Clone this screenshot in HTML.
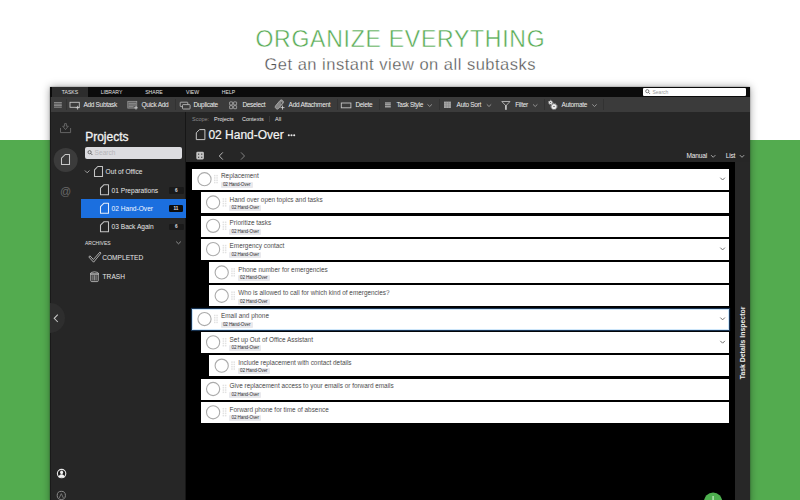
<!DOCTYPE html>
<html><head><meta charset="utf-8">
<style>
*{margin:0;padding:0;box-sizing:border-box}
html,body{width:800px;height:500px;overflow:hidden;background:#fff;font-family:"Liberation Sans",sans-serif}
.a{position:absolute;white-space:nowrap}
#green{position:absolute;left:0;top:140px;width:800px;height:360px;background:#53ab4f}
#title{left:0;width:800px;top:28px;text-align:center;color:#57ab54;font-size:23px;letter-spacing:0.75px;line-height:23px;text-indent:0.75px;-webkit-text-stroke:0.45px #fff}
#sub{left:0;width:800px;top:54.5px;text-align:center;color:#505050;font-size:16.5px;letter-spacing:0.5px;line-height:18px;text-indent:0.5px;-webkit-text-stroke:0.3px #fff}
#win{position:absolute;left:50px;top:87px;width:700px;height:420px;background:#262626;box-shadow:0 0 1.5px rgba(0,0,0,.4),0 0 8px rgba(0,0,0,.38)}
.p{position:absolute;white-space:nowrap}
.tab{position:absolute;top:87px;height:10px;color:#e2e2e2;font-size:5.1px;line-height:10px;text-align:center}
.tb{position:absolute;top:97.2px;height:15px;line-height:15px;color:#ededed;font-size:6.5px;letter-spacing:-0.3px;margin-left:0.8px;white-space:nowrap}
.sep{position:absolute;top:99px;width:1px;height:11px;background:#323232}
.card{position:absolute;background:#fff}
.card.sel{box-shadow:0 0 0 1.1px #1a3554;border:1.2px solid #cde6fa}
.ct{position:absolute;font-size:6.4px;line-height:8px;color:#1f1f1f;white-space:nowrap;-webkit-text-stroke:0.1px #fff}
.tag{position:absolute;height:6px;padding:0 2.3px;font-size:4.6px;letter-spacing:-0.12px;line-height:6px;color:#333;background:#e9e9ed;border-radius:1px;white-space:nowrap}
.sb{position:absolute;white-space:nowrap;color:#e6e6e6;font-size:6.6px;line-height:8px}
.badge{position:absolute;height:6.6px;width:14.5px;background:#1a1a1a;color:#e0e0e0;font-size:4.6px;line-height:4.6px;display:flex;align-items:center;justify-content:center;padding-top:1.3px;border-radius:1.2px;font-weight:bold}
</style></head><body>
<div id="green"></div>
<div id="title" class="a">ORGANIZE EVERYTHING</div>
<div id="sub" class="a">Get an instant view on all subtasks</div>

<div id="win"></div>
<!-- tab bar -->
<div class="p" style="left:50px;top:87px;width:700px;height:10px;background:#0b0b0b"></div>
<div class="tab" style="left:52px;width:36px;background:#2d2d2d">TASKS</div>
<div class="tab" style="left:99px;width:25px">LIBRARY</div>
<div class="tab" style="left:144px;width:20px">SHARE</div>
<div class="tab" style="left:184.5px;width:16px">VIEW</div>
<div class="tab" style="left:220.5px;width:16px">HELP</div>
<div class="p" style="left:643px;top:88px;width:102.6px;height:8px;background:#fff;border-radius:1px"></div>
<div class="p" style="left:652.5px;top:87.8px;height:8px;line-height:8px;font-size:5px;color:#9a9a9a">Search</div>
<!-- toolbar -->
<div class="p" style="left:50px;top:97px;width:700px;height:15px;background:#3b3b3b"></div>
<div class="tb" style="left:82.6px">Add Subtask</div>
<div class="tb" style="left:140.6px">Quick Add</div>
<div class="tb" style="left:192.6px">Duplicate</div>
<div class="tb" style="left:241.6px">Deselect</div>
<div class="tb" style="left:287.8px">Add Attachment</div>
<div class="tb" style="left:354.6px">Delete</div>
<div class="tb" style="left:395.6px">Task Style</div>
<div class="tb" style="left:455.8px">Auto Sort</div>
<div class="tb" style="left:514.4px">Filter</div>
<div class="tb" style="left:560.8px">Automate</div>
<div class="sep" style="left:66px"></div>
<div class="sep" style="left:175.3px"></div>
<div class="sep" style="left:337.3px"></div>
<div class="sep" style="left:379.3px"></div>
<div class="sep" style="left:438.5px"></div>
<div class="sep" style="left:543.5px"></div>
<div class="sep" style="left:603px"></div>

<!-- sidebar -->
<div class="p" style="left:50px;top:112px;width:135px;height:388px;background:#262626"></div>
<div class="p" style="left:185px;top:112px;width:1px;height:388px;background:#161616"></div>
<div class="p" style="left:50px;top:97px;width:0.8px;height:403px;background:#1a1a1a"></div>
<div class="p" style="left:85.2px;top:130.9px;font-size:12px;line-height:13px;color:#f2f2f2;-webkit-text-stroke:0.3px #f2f2f2">Projects</div>
<div class="p" style="left:84.8px;top:147px;width:97.7px;height:11.8px;background:#dcdce0;border-radius:2px"></div>
<div class="p" style="left:94.6px;top:148.5px;font-size:6.6px;line-height:8px;color:#b4b4b8">Search</div>
<div class="sb" style="left:105.6px;top:168.3px">Out of Office</div>
<div class="sb" style="left:111.6px;top:186.6px">01 Preparations</div>
<div class="badge" style="left:169px;top:187px">6</div>
<div class="p" style="left:80.6px;top:198.8px;width:105px;height:19px;background:#1b6fdf"></div>
<div class="sb" style="left:111.6px;top:205.1px;color:#f4f8ff">02 Hand-Over</div>
<div class="badge" style="left:168.6px;top:205.4px;background:#0c0c0c;color:#e8e8e8">11</div>
<div class="sb" style="left:111.6px;top:223.4px">03 Back Again</div>
<div class="badge" style="left:169px;top:223.6px">6</div>
<div class="p" style="left:85px;top:239.7px;font-size:5px;line-height:6px;color:#e0e0e0">ARCHIVES</div>
<div class="sb" style="left:102.2px;top:254px">COMPLETED</div>
<div class="sb" style="left:102.6px;top:272.6px">TRASH</div>

<!-- main header -->
<div class="p" style="left:186px;top:112px;width:564px;height:50.5px;background:#262626"></div>
<div class="p" style="left:192px;top:115.8px;font-size:5.5px;line-height:7px;color:#8a8a8a">Scope:</div>
<div class="p" style="left:214px;top:115.8px;font-size:5.5px;line-height:7px;color:#e6e6e6">Projects</div>
<div class="p" style="left:242px;top:115.8px;font-size:5.5px;line-height:7px;color:#e6e6e6">Contexts</div>
<div class="p" style="left:269px;top:115.5px;width:0.8px;height:6.3px;background:#3a3a3a"></div>
<div class="p" style="left:275px;top:115.8px;font-size:5.5px;line-height:7px;color:#e6e6e6">All</div>
<div class="p" style="left:208.4px;top:128.3px;font-size:12px;line-height:14px;color:#f4f4f4;-webkit-text-stroke:0.2px #f4f4f4">02 Hand-Over</div>
<div class="p" style="left:686.6px;top:151.9px;font-size:6.6px;letter-spacing:-0.22px;line-height:8px;color:#ededed">Manual</div>
<div class="p" style="left:725.7px;top:151.9px;font-size:6.6px;letter-spacing:-0.22px;line-height:8px;color:#ededed">List</div>

<!-- list -->
<div class="p" style="left:186px;top:162.2px;width:549px;height:338px;background:#000"></div>
<div class="p" style="left:735px;top:162.2px;width:15px;height:338px;background:#272727"></div>
<div class="p" style="left:742.5px;top:343px;font-size:6.9px;line-height:8px;font-weight:bold;color:#f0f0f0;transform:translate(-50%,-50%) rotate(-90deg)">Task Details Inspector</div>
<div class="card" style="left:192.00px;top:168.90px;width:537.00px;height:21.0px"></div>
<div class="ct" style="left:221.00px;top:172.40px">Replacement</div>
<div class="tag" style="left:220.60px;top:182.00px">02 Hand-Over</div>
<div class="card" style="left:200.60px;top:192.21px;width:528.40px;height:21.0px"></div>
<div class="ct" style="left:229.60px;top:195.71px">Hand over open topics and tasks</div>
<div class="tag" style="left:229.20px;top:205.31px">02 Hand-Over</div>
<div class="card" style="left:200.60px;top:215.52px;width:528.40px;height:21.0px"></div>
<div class="ct" style="left:229.60px;top:219.02px">Prioritize tasks</div>
<div class="tag" style="left:229.20px;top:228.62px">02 Hand-Over</div>
<div class="card" style="left:200.60px;top:238.83px;width:528.40px;height:21.0px"></div>
<div class="ct" style="left:229.60px;top:242.33px">Emergency contact</div>
<div class="tag" style="left:229.20px;top:251.93px">02 Hand-Over</div>
<div class="card" style="left:209.20px;top:262.14px;width:519.80px;height:21.0px"></div>
<div class="ct" style="left:238.20px;top:265.64px">Phone number for emergencies</div>
<div class="tag" style="left:237.80px;top:275.24px">02 Hand-Over</div>
<div class="card" style="left:209.20px;top:285.45px;width:519.80px;height:21.0px"></div>
<div class="ct" style="left:238.20px;top:288.95px">Who is allowed to call for which kind of emergencies?</div>
<div class="tag" style="left:237.80px;top:298.55px">02 Hand-Over</div>
<div class="card sel" style="left:192.00px;top:308.76px;width:537.00px;height:21.0px"></div>
<div class="ct" style="left:221.00px;top:312.26px">Email and phone</div>
<div class="tag" style="left:220.60px;top:321.86px">02 Hand-Over</div>
<div class="card" style="left:200.60px;top:332.07px;width:528.40px;height:21.0px"></div>
<div class="ct" style="left:229.60px;top:335.57px">Set up Out of Office Assistant</div>
<div class="tag" style="left:229.20px;top:345.17px">02 Hand-Over</div>
<div class="card" style="left:209.20px;top:355.38px;width:519.80px;height:21.0px"></div>
<div class="ct" style="left:238.20px;top:358.88px">Include replacement with contact details</div>
<div class="tag" style="left:237.80px;top:368.48px">02 Hand-Over</div>
<div class="card" style="left:200.60px;top:378.69px;width:528.40px;height:21.0px"></div>
<div class="ct" style="left:229.60px;top:382.19px">Give replacement access to your emails or forward emails</div>
<div class="tag" style="left:229.20px;top:391.79px">02 Hand-Over</div>
<div class="card" style="left:200.60px;top:402.00px;width:528.40px;height:21.0px"></div>
<div class="ct" style="left:229.60px;top:405.50px">Forward phone for time of absence</div>
<div class="tag" style="left:229.20px;top:415.10px">02 Hand-Over</div>

<svg width="800" height="500" viewBox="0 0 800 500" style="position:absolute;left:0;top:0">
<circle cx="204.50" cy="179.20" r="6.6" fill="none" stroke="#ababab" stroke-width="1.1"/>
<rect x="214.00" y="174.90" width="1.5" height="1.5" fill="#e2e2e2"/>
<rect x="216.30" y="174.90" width="1.5" height="1.5" fill="#e2e2e2"/>
<rect x="214.00" y="177.20" width="1.5" height="1.5" fill="#e2e2e2"/>
<rect x="216.30" y="177.20" width="1.5" height="1.5" fill="#e2e2e2"/>
<rect x="214.00" y="179.50" width="1.5" height="1.5" fill="#e2e2e2"/>
<rect x="216.30" y="179.50" width="1.5" height="1.5" fill="#e2e2e2"/>
<rect x="214.00" y="181.80" width="1.5" height="1.5" fill="#e2e2e2"/>
<rect x="216.30" y="181.80" width="1.5" height="1.5" fill="#e2e2e2"/>
<path d="M720.3 177.70 L722.6 180.00 L724.9 177.70" fill="none" stroke="#6e6e6e" stroke-width="1"/>
<circle cx="213.10" cy="202.51" r="6.6" fill="none" stroke="#ababab" stroke-width="1.1"/>
<rect x="222.60" y="198.21" width="1.5" height="1.5" fill="#e2e2e2"/>
<rect x="224.90" y="198.21" width="1.5" height="1.5" fill="#e2e2e2"/>
<rect x="222.60" y="200.51" width="1.5" height="1.5" fill="#e2e2e2"/>
<rect x="224.90" y="200.51" width="1.5" height="1.5" fill="#e2e2e2"/>
<rect x="222.60" y="202.81" width="1.5" height="1.5" fill="#e2e2e2"/>
<rect x="224.90" y="202.81" width="1.5" height="1.5" fill="#e2e2e2"/>
<rect x="222.60" y="205.11" width="1.5" height="1.5" fill="#e2e2e2"/>
<rect x="224.90" y="205.11" width="1.5" height="1.5" fill="#e2e2e2"/>
<circle cx="213.10" cy="225.82" r="6.6" fill="none" stroke="#ababab" stroke-width="1.1"/>
<rect x="222.60" y="221.52" width="1.5" height="1.5" fill="#e2e2e2"/>
<rect x="224.90" y="221.52" width="1.5" height="1.5" fill="#e2e2e2"/>
<rect x="222.60" y="223.82" width="1.5" height="1.5" fill="#e2e2e2"/>
<rect x="224.90" y="223.82" width="1.5" height="1.5" fill="#e2e2e2"/>
<rect x="222.60" y="226.12" width="1.5" height="1.5" fill="#e2e2e2"/>
<rect x="224.90" y="226.12" width="1.5" height="1.5" fill="#e2e2e2"/>
<rect x="222.60" y="228.42" width="1.5" height="1.5" fill="#e2e2e2"/>
<rect x="224.90" y="228.42" width="1.5" height="1.5" fill="#e2e2e2"/>
<circle cx="213.10" cy="249.13" r="6.6" fill="none" stroke="#ababab" stroke-width="1.1"/>
<rect x="222.60" y="244.83" width="1.5" height="1.5" fill="#e2e2e2"/>
<rect x="224.90" y="244.83" width="1.5" height="1.5" fill="#e2e2e2"/>
<rect x="222.60" y="247.13" width="1.5" height="1.5" fill="#e2e2e2"/>
<rect x="224.90" y="247.13" width="1.5" height="1.5" fill="#e2e2e2"/>
<rect x="222.60" y="249.43" width="1.5" height="1.5" fill="#e2e2e2"/>
<rect x="224.90" y="249.43" width="1.5" height="1.5" fill="#e2e2e2"/>
<rect x="222.60" y="251.73" width="1.5" height="1.5" fill="#e2e2e2"/>
<rect x="224.90" y="251.73" width="1.5" height="1.5" fill="#e2e2e2"/>
<path d="M720.3 247.63 L722.6 249.93 L724.9 247.63" fill="none" stroke="#6e6e6e" stroke-width="1"/>
<circle cx="221.70" cy="272.44" r="6.6" fill="none" stroke="#ababab" stroke-width="1.1"/>
<rect x="231.20" y="268.14" width="1.5" height="1.5" fill="#e2e2e2"/>
<rect x="233.50" y="268.14" width="1.5" height="1.5" fill="#e2e2e2"/>
<rect x="231.20" y="270.44" width="1.5" height="1.5" fill="#e2e2e2"/>
<rect x="233.50" y="270.44" width="1.5" height="1.5" fill="#e2e2e2"/>
<rect x="231.20" y="272.74" width="1.5" height="1.5" fill="#e2e2e2"/>
<rect x="233.50" y="272.74" width="1.5" height="1.5" fill="#e2e2e2"/>
<rect x="231.20" y="275.04" width="1.5" height="1.5" fill="#e2e2e2"/>
<rect x="233.50" y="275.04" width="1.5" height="1.5" fill="#e2e2e2"/>
<circle cx="221.70" cy="295.75" r="6.6" fill="none" stroke="#ababab" stroke-width="1.1"/>
<rect x="231.20" y="291.45" width="1.5" height="1.5" fill="#e2e2e2"/>
<rect x="233.50" y="291.45" width="1.5" height="1.5" fill="#e2e2e2"/>
<rect x="231.20" y="293.75" width="1.5" height="1.5" fill="#e2e2e2"/>
<rect x="233.50" y="293.75" width="1.5" height="1.5" fill="#e2e2e2"/>
<rect x="231.20" y="296.05" width="1.5" height="1.5" fill="#e2e2e2"/>
<rect x="233.50" y="296.05" width="1.5" height="1.5" fill="#e2e2e2"/>
<rect x="231.20" y="298.35" width="1.5" height="1.5" fill="#e2e2e2"/>
<rect x="233.50" y="298.35" width="1.5" height="1.5" fill="#e2e2e2"/>
<circle cx="204.50" cy="319.06" r="6.6" fill="none" stroke="#ababab" stroke-width="1.1"/>
<rect x="214.00" y="314.76" width="1.5" height="1.5" fill="#e2e2e2"/>
<rect x="216.30" y="314.76" width="1.5" height="1.5" fill="#e2e2e2"/>
<rect x="214.00" y="317.06" width="1.5" height="1.5" fill="#e2e2e2"/>
<rect x="216.30" y="317.06" width="1.5" height="1.5" fill="#e2e2e2"/>
<rect x="214.00" y="319.36" width="1.5" height="1.5" fill="#e2e2e2"/>
<rect x="216.30" y="319.36" width="1.5" height="1.5" fill="#e2e2e2"/>
<rect x="214.00" y="321.66" width="1.5" height="1.5" fill="#e2e2e2"/>
<rect x="216.30" y="321.66" width="1.5" height="1.5" fill="#e2e2e2"/>
<path d="M720.3 317.56 L722.6 319.86 L724.9 317.56" fill="none" stroke="#6e6e6e" stroke-width="1"/>
<circle cx="213.10" cy="342.37" r="6.6" fill="none" stroke="#ababab" stroke-width="1.1"/>
<rect x="222.60" y="338.07" width="1.5" height="1.5" fill="#e2e2e2"/>
<rect x="224.90" y="338.07" width="1.5" height="1.5" fill="#e2e2e2"/>
<rect x="222.60" y="340.37" width="1.5" height="1.5" fill="#e2e2e2"/>
<rect x="224.90" y="340.37" width="1.5" height="1.5" fill="#e2e2e2"/>
<rect x="222.60" y="342.67" width="1.5" height="1.5" fill="#e2e2e2"/>
<rect x="224.90" y="342.67" width="1.5" height="1.5" fill="#e2e2e2"/>
<rect x="222.60" y="344.97" width="1.5" height="1.5" fill="#e2e2e2"/>
<rect x="224.90" y="344.97" width="1.5" height="1.5" fill="#e2e2e2"/>
<path d="M720.3 340.87 L722.6 343.17 L724.9 340.87" fill="none" stroke="#6e6e6e" stroke-width="1"/>
<circle cx="221.70" cy="365.68" r="6.6" fill="none" stroke="#ababab" stroke-width="1.1"/>
<rect x="231.20" y="361.38" width="1.5" height="1.5" fill="#e2e2e2"/>
<rect x="233.50" y="361.38" width="1.5" height="1.5" fill="#e2e2e2"/>
<rect x="231.20" y="363.68" width="1.5" height="1.5" fill="#e2e2e2"/>
<rect x="233.50" y="363.68" width="1.5" height="1.5" fill="#e2e2e2"/>
<rect x="231.20" y="365.98" width="1.5" height="1.5" fill="#e2e2e2"/>
<rect x="233.50" y="365.98" width="1.5" height="1.5" fill="#e2e2e2"/>
<rect x="231.20" y="368.28" width="1.5" height="1.5" fill="#e2e2e2"/>
<rect x="233.50" y="368.28" width="1.5" height="1.5" fill="#e2e2e2"/>
<circle cx="213.10" cy="388.99" r="6.6" fill="none" stroke="#ababab" stroke-width="1.1"/>
<rect x="222.60" y="384.69" width="1.5" height="1.5" fill="#e2e2e2"/>
<rect x="224.90" y="384.69" width="1.5" height="1.5" fill="#e2e2e2"/>
<rect x="222.60" y="386.99" width="1.5" height="1.5" fill="#e2e2e2"/>
<rect x="224.90" y="386.99" width="1.5" height="1.5" fill="#e2e2e2"/>
<rect x="222.60" y="389.29" width="1.5" height="1.5" fill="#e2e2e2"/>
<rect x="224.90" y="389.29" width="1.5" height="1.5" fill="#e2e2e2"/>
<rect x="222.60" y="391.59" width="1.5" height="1.5" fill="#e2e2e2"/>
<rect x="224.90" y="391.59" width="1.5" height="1.5" fill="#e2e2e2"/>
<circle cx="213.10" cy="412.30" r="6.6" fill="none" stroke="#ababab" stroke-width="1.1"/>
<rect x="222.60" y="408.00" width="1.5" height="1.5" fill="#e2e2e2"/>
<rect x="224.90" y="408.00" width="1.5" height="1.5" fill="#e2e2e2"/>
<rect x="222.60" y="410.30" width="1.5" height="1.5" fill="#e2e2e2"/>
<rect x="224.90" y="410.30" width="1.5" height="1.5" fill="#e2e2e2"/>
<rect x="222.60" y="412.60" width="1.5" height="1.5" fill="#e2e2e2"/>
<rect x="224.90" y="412.60" width="1.5" height="1.5" fill="#e2e2e2"/>
<rect x="222.60" y="414.90" width="1.5" height="1.5" fill="#e2e2e2"/>
<rect x="224.90" y="414.90" width="1.5" height="1.5" fill="#e2e2e2"/>
<rect x="54" y="102.20" width="7.8" height="0.9" fill="#9a9a9a"/>
<rect x="54" y="103.70" width="7.8" height="0.9" fill="#9a9a9a"/>
<rect x="54" y="105.20" width="7.8" height="0.9" fill="#9a9a9a"/>
<rect x="54" y="106.70" width="7.8" height="0.9" fill="#9a9a9a"/>
<rect x="70" y="102.3" width="9.3" height="5" fill="none" stroke="#c4c4c4" stroke-width="0.9"/>
<path d="M77.6 105.8 V109.6 M75.7 107.7 H79.5" stroke="#d0d0d0" stroke-width="0.8"/>
<rect x="127.8" y="101.3" width="9" height="6.8" fill="#5a5a5a" stroke="#a0a0a0" stroke-width="0.7"/>
<path d="M128.6 103.3 H136 M128.6 105 H136 M128.6 106.7 H133.5" stroke="#a8a8a8" stroke-width="0.7"/>
<path d="M136 106 V109.6 M134.2 107.8 H137.8" stroke="#d0d0d0" stroke-width="0.8"/>
<rect x="180.2" y="102.2" width="7.6" height="4.4" rx="0.6" fill="none" stroke="#c4c4c4" stroke-width="0.8"/>
<rect x="182.5" y="104.6" width="7.6" height="4.4" rx="0.6" fill="#3b3b3b" stroke="#c4c4c4" stroke-width="0.8"/>
<rect x="229.6" y="101.9" width="3" height="3" rx="0.4" fill="none" stroke="#bdbdbd" stroke-width="0.7"/>
<rect x="229.6" y="105.7" width="3" height="3" rx="0.4" fill="none" stroke="#bdbdbd" stroke-width="0.7"/>
<rect x="233.6" y="101.9" width="3" height="3" rx="0.4" fill="none" stroke="#bdbdbd" stroke-width="0.7"/>
<rect x="233.6" y="105.7" width="3" height="3" rx="0.4" fill="none" stroke="#bdbdbd" stroke-width="0.7"/>
<rect x="-2" y="-5.2" width="4" height="10.4" rx="1.8" transform="translate(279.3 104.5) rotate(40)" fill="#858585" stroke="#b4b4b4" stroke-width="0.7"/>
<circle cx="281.4" cy="102.9" r="0.6" fill="#333"/>
<path d="M282.5 105.6 V109.6 M280.5 107.6 H284.5" stroke="#d8d8d8" stroke-width="0.8"/>
<rect x="341.3" y="103" width="9.6" height="4.8" fill="none" stroke="#c4c4c4" stroke-width="0.9"/>
<path d="M385 102.9 H390.8 M385 104.8 H390.8 M385 106.7 H390.8" stroke="#a0a0a0" stroke-width="1.5"/>
<rect x="444" y="101.6" width="6.9" height="6.4" fill="#a8a8a8"/>
<path d="M446.3 101.6 V108 M448.6 101.6 V108 M444 103.7 H450.9 M444 105.9 H450.9" stroke="#7a7a7a" stroke-width="0.4"/>
<path d="M427.5 104.4 L429.7 106.5 L431.9 104.4" fill="none" stroke="#aaaaaa" stroke-width="0.8"/>
<path d="M486.8 104.4 L489 106.5 L491.2 104.4" fill="none" stroke="#aaaaaa" stroke-width="0.8"/>
<path d="M533.0 104.4 L535.2 106.5 L537.4000000000001 104.4" fill="none" stroke="#aaaaaa" stroke-width="0.8"/>
<path d="M592.3 104.4 L594.5 106.5 L596.7 104.4" fill="none" stroke="#aaaaaa" stroke-width="0.8"/>
<path d="M501.8 101.5 H510 L505.9 105.8 Z" fill="none" stroke="#c0c0c0" stroke-width="0.85" stroke-linejoin="round"/>
<rect x="505" y="105.2" width="1.8" height="4.6" fill="#c0c0c0"/>
<circle cx="550.6" cy="102.5" r="1.8" fill="#e4e4e4"/>
<circle cx="550.6" cy="102.5" r="2.15" fill="none" stroke="#e4e4e4" stroke-width="0.7" stroke-dasharray="0.8 0.9"/>
<circle cx="550.6" cy="102.5" r="0.55" fill="#555"/>
<circle cx="554" cy="106.5" r="2.6" fill="#ececec"/>
<circle cx="554" cy="106.5" r="3.05" fill="none" stroke="#ececec" stroke-width="0.8" stroke-dasharray="1 1.1"/>
<ellipse cx="554" cy="106.5" rx="0.9" ry="0.6" fill="#666"/>
<circle cx="647.3" cy="91.2" r="1.6" fill="none" stroke="#666" stroke-width="0.8"/>
<path d="M648.5 92.4 L650 93.9" stroke="#666" stroke-width="0.9"/>
<path d="M60.5 128 V132.6 H70.6 V128" fill="none" stroke="#6a6a6a" stroke-width="0.9"/>
<path d="M64.6 123.6 H66.4 V126.2 H68.3 L65.5 129.6 L62.7 126.2 H64.6 Z" fill="none" stroke="#6a6a6a" stroke-width="0.9" stroke-linejoin="round"/>
<circle cx="65.7" cy="160" r="12" fill="#3b3b3b"/>
<path d="M61.5 158.2 L65.2 154.5 L69.5 154.5 L69.5 164.5 L61.5 164.5 Z" fill="none" stroke="#c8c8c8" stroke-width="1.05" stroke-linejoin="round"/>
<text x="65.5" y="194.9" font-family="Liberation Sans" font-size="11" fill="#6a6a6a" text-anchor="middle">@</text>
<circle cx="89.6" cy="152.2" r="1.6" fill="none" stroke="#555" stroke-width="0.8"/>
<path d="M90.8 153.4 L92.4 155" stroke="#555" stroke-width="0.9"/>
<path d="M84.9 170.5 L87.2 172.8 L89.5 170.5" fill="none" stroke="#b0b0b0" stroke-width="0.9"/>
<path d="M94.5 169.8 L97.8 166.5 L102.5 166.5 L102.5 176.5 L94.5 176.5 Z" fill="none" stroke="#c4c4c4" stroke-width="1.05" stroke-linejoin="round"/>
<path d="M100.5 188.10000000000002 L103.8 184.8 L108.5 184.8 L108.5 194.8 L100.5 194.8 Z" fill="none" stroke="#c4c4c4" stroke-width="1.05" stroke-linejoin="round"/>
<path d="M100.5 206.60000000000002 L103.8 203.3 L108.5 203.3 L108.5 213.3 L100.5 213.3 Z" fill="none" stroke="#e6eefa" stroke-width="1.05" stroke-linejoin="round"/>
<path d="M100.5 225.10000000000002 L103.8 221.8 L108.5 221.8 L108.5 231.8 L100.5 231.8 Z" fill="none" stroke="#c4c4c4" stroke-width="1.05" stroke-linejoin="round"/>
<path d="M176.2 241.6 L178.5 243.8 L180.8 241.6" fill="none" stroke="#aaa" stroke-width="0.8"/>
<path d="M88.8 257 L89.9 255.8 L93.4 259.5 L99.9 252.1 L101 253.1 L93.6 262.2 Z" fill="none" stroke="#cfcfcf" stroke-width="0.8" stroke-linejoin="round"/>
<path d="M90.7 274 H98.3 V280.6 Q98.3 281.6 97.3 281.6 H91.7 Q90.7 281.6 90.7 280.6 Z" fill="#3a3a3a" stroke="#c4c4c4" stroke-width="0.8"/>
<path d="M90.2 274 Q90.2 272 94.5 271.8 Q98.8 272 98.8 274 Z" fill="none" stroke="#c4c4c4" stroke-width="0.8"/>
<path d="M92.9 275.2 V280.4 M94.5 275.2 V280.4 M96.1 275.2 V280.4" stroke="#c4c4c4" stroke-width="0.6"/>
<path d="M50 303 A15 15 0 0 1 50 333 Z" fill="#2e2e2e"/>
<path d="M57.8 314.6 L54.2 318.3 L57.8 322" fill="none" stroke="#c8c8c8" stroke-width="1.05"/>
<circle cx="61.6" cy="473.6" r="4.2" fill="#1e1e1e" stroke="#e8e8e8" stroke-width="1.1"/>
<ellipse cx="61.6" cy="472.3" rx="1.5" ry="1.9" fill="#f0f0f0"/>
<path d="M58.6 477.3 Q58.8 474.6 61.6 474.3 Q64.4 474.6 64.6 477.3 Z" fill="#f0f0f0"/>
<circle cx="61.3" cy="495.4" r="4.1" fill="none" stroke="#8a8a8a" stroke-width="1"/>
<path d="M59.2 498 L61.3 493.6 L63.4 498" fill="none" stroke="#7a7a7a" stroke-width="0.9"/>
<path d="M196.3 132.79999999999998 L199.5 129.6 L204.9 129.6 L204.9 139.6 L196.3 139.6 Z" fill="none" stroke="#c8c8c8" stroke-width="1" stroke-linejoin="round"/>
<rect x="196.3" y="151.8" width="7.6" height="7.6" rx="1.3" fill="#c4c4c4"/>
<rect x="198.10" y="153.60" width="1.1" height="1.1" fill="#262626"/>
<rect x="198.10" y="156.70" width="1.1" height="1.1" fill="#262626"/>
<rect x="201.20" y="153.60" width="1.1" height="1.1" fill="#262626"/>
<rect x="201.20" y="156.70" width="1.1" height="1.1" fill="#262626"/>
<path d="M222.8 152.4 L219.3 156 L222.8 159.6" fill="none" stroke="#c8c8c8" stroke-width="0.9"/>
<path d="M241 152.4 L244.5 156 L241 159.6" fill="none" stroke="#8a8a8a" stroke-width="0.9"/>
<circle cx="288.8" cy="135.3" r="1.05" fill="#e8e8e8"/>
<circle cx="291.5" cy="135.3" r="1.05" fill="#e8e8e8"/>
<circle cx="294.2" cy="135.3" r="1.05" fill="#e8e8e8"/>
<path d="M711 155.1 L713.2 157.3 L715.4 155.1" fill="none" stroke="#b0b0b0" stroke-width="0.9"/>
<path d="M739.8 155.1 L742 157.3 L744.2 155.1" fill="none" stroke="#b0b0b0" stroke-width="0.9"/>
<circle cx="713.1" cy="501.7" r="9.2" fill="#4eb04f"/>
<path d="M713.1 496 V506 M708.1 501.2 H718.1" stroke="#b9e6b8" stroke-width="1.4"/>
</svg>
</body></html>
